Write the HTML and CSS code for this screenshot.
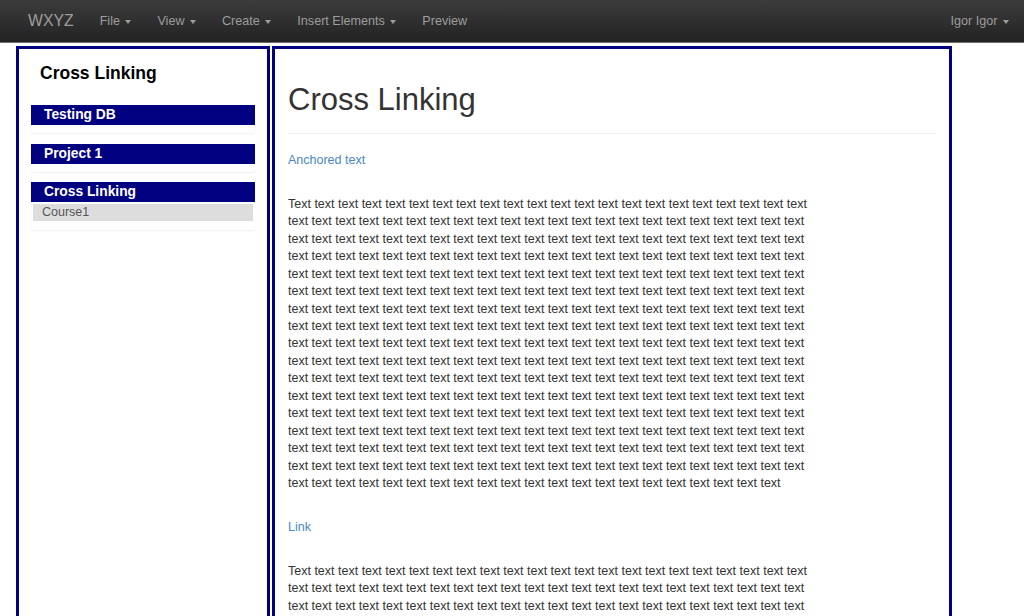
FILE: index.html
```html
<!DOCTYPE html>
<html>
<head>
<meta charset="utf-8">
<title>Cross Linking</title>
<link rel="stylesheet" href="styles.css">
</head>
<body>
<nav class="navbar">
  <a class="brand" href="#">WXYZ</a>
  <ul class="nav-menu">
    <li><a href="#">File <span class="caret"></span></a></li>
    <li><a href="#">View <span class="caret"></span></a></li>
    <li><a href="#">Create <span class="caret"></span></a></li>
    <li><a href="#">Insert Elements <span class="caret"></span></a></li>
    <li><a href="#">Preview</a></li>
  </ul>
  <ul class="nav-menu nav-right">
    <li><a href="#">Igor Igor <span class="caret"></span></a></li>
  </ul>
</nav>
<div class="layout">
  <aside class="sidebar">
    <h4 class="side-title">Cross Linking</h4>
    <div class="panel">
      <div class="panel-heading">Testing DB</div>
      <div class="panel-body"></div>
    </div>
    <div class="panel">
      <div class="panel-heading">Project 1</div>
      <div class="panel-body"></div>
    </div>
    <div class="panel">
      <div class="panel-heading">Cross Linking</div>
      <div class="panel-body">
        <div class="list-item">Course1</div>
      </div>
    </div>
  </aside>
  <main class="content">
    <div class="page-header"><h1>Cross Linking</h1></div>
    <p class="text"><a href="#">Anchored text</a></p>
    <p class="text">Text text text text text text text text text text text text text text text text text text text text text text
text text text text text text text text text text text text text text text text text text text text text text
text text text text text text text text text text text text text text text text text text text text text text
text text text text text text text text text text text text text text text text text text text text text text
text text text text text text text text text text text text text text text text text text text text text text
text text text text text text text text text text text text text text text text text text text text text text
text text text text text text text text text text text text text text text text text text text text text text
text text text text text text text text text text text text text text text text text text text text text text
text text text text text text text text text text text text text text text text text text text text text text
text text text text text text text text text text text text text text text text text text text text text text
text text text text text text text text text text text text text text text text text text text text text text
text text text text text text text text text text text text text text text text text text text text text text
text text text text text text text text text text text text text text text text text text text text text text
text text text text text text text text text text text text text text text text text text text text text text
text text text text text text text text text text text text text text text text text text text text text text
text text text text text text text text text text text text text text text text text text text text text text
text text text text text text text text text text text text text text text text text text text text text</p>
    <p class="text"><a href="#">Link</a></p>
    <p class="text">Text text text text text text text text text text text text text text text text text text text text text text
text text text text text text text text text text text text text text text text text text text text text text
text text text text text text text text text text text text text text text text text text text text text text
text text text text text text text text text text text text text text text text text text text text text text
text text text text text text text text text text text text text text text text text text text text text text
text text text text text text text text text text text text text text text text text text text text text text
text text text text text text text text text text text text text text text text text text text text text</p>
  </main>
</div>
</body>
</html>
```

FILE: styles.css
```css
html, body {
  margin: 0;
  padding: 0;
  background: #fff;
}
body {
  font-family: "Liberation Sans", Arial, Helvetica, sans-serif;
  font-size: 12.5px;
  line-height: 17.44px;
  color: #333;
}
a {
  color: #4a86c5;
  text-decoration: none;
}

/* Navbar */
.navbar {
  display: flex;
  align-items: center;
  height: 43px;
  padding: 0 0 0 15px;
  background: linear-gradient(to bottom, #3c3c3c 0%, #222 100%);
  border-bottom: 1px solid #6e6e6e;
  box-sizing: border-box;
}
.brand {
  color: #9d9d9d;
  font-size: 15.8px;
  padding: 0 13px;
  line-height: 42px;
}
.nav-menu {
  display: flex;
  list-style: none;
  margin: 0;
  padding: 0;
}
.nav-menu a {
  display: block;
  color: #9d9d9d;
  font-size: 12.6px;
  padding: 0 13px;
  line-height: 42px;
}
.nav-right {
  margin-left: auto;
  padding-right: 2px;
}
.caret {
  display: inline-block;
  width: 0;
  height: 0;
  margin-left: 2px;
  vertical-align: middle;
  border-top: 4px solid #9d9d9d;
  border-left: 3.5px solid transparent;
  border-right: 3.5px solid transparent;
}

/* Layout */
.layout {
  display: flex;
  align-items: stretch;
  gap: 2px;
  padding: 3px 0 0 16px;
}
.sidebar {
  width: 254px;
  box-sizing: border-box;
  border: 3px solid #000080;
  padding: 0 12px;
  min-height: 573px;
}
.side-title {
  margin: 14px 0 22px;
  padding-left: 9px;
  font-size: 17.5px;
  line-height: 20px;
  font-weight: bold;
  color: #000;
}
.panel {
  background: #fff;
  border-radius: 3px;
  box-shadow: 0 1px 2px rgba(0, 0, 0, 0.06);
  margin-bottom: 10.5px;
}
.panel-heading {
  background: #000080;
  color: #fff;
  font-weight: bold;
  font-size: 13.8px;
  line-height: 20px;
  height: 20px;
  padding-left: 13px;
}
.panel-body {
  padding: 0 2px 8px;
}
.list-item {
  margin-top: 2px;
  background: #ddd;
  color: #555;
  font-size: 12.5px;
  line-height: 17px;
  padding-left: 9px;
  margin-bottom: 1px;
}

/* Content */
.content {
  width: 680px;
  box-sizing: border-box;
  border: 3px solid #000080;
  padding: 0 13px;
}
.page-header {
  margin: 0 0 18px;
  padding-bottom: 16px;
  border-bottom: 1px solid #eee;
}
.page-header h1 {
  margin: 34px 0 0;
  font-size: 31px;
  line-height: 34px;
  font-weight: 500;
  color: #333;
}
.text {
  max-width: 530px;
  margin: 0 0 26.5px;
}
```
